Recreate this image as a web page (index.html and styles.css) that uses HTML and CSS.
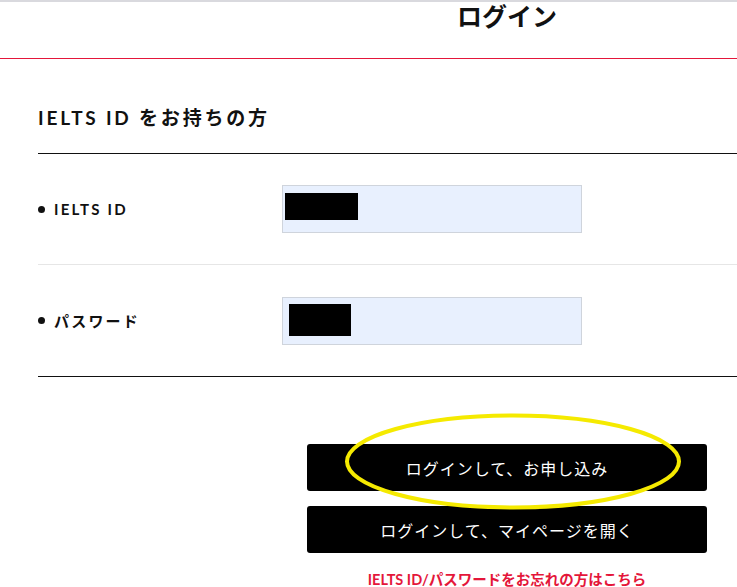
FILE: index.html
```html
<!DOCTYPE html>
<html lang="ja">

<head>
  <meta charset="UTF-8" />
  <title>ログイン</title>
  <meta name="viewport" content="width=device-width, initial-scale=1.0" />
  <link rel="stylesheet" href="styles.css">
</head>

<body>
  <div class="page">
    <header class="page-header">
      <h1>ログイン</h1>
    </header>

    <main class="content">
      <h2 class="section-title">IELTS ID をお持ちの方</h2>

      <form class="login-form">
        <div class="form-row">
          <label class="row-label">IELTS ID</label>
          <div class="field">
            <span class="mask mask-id"></span>
          </div>
        </div>
        <div class="form-row">
          <label class="row-label">パスワード</label>
          <div class="field">
            <span class="mask mask-pass"></span>
          </div>
        </div>
      </form>

      <div class="actions">
        <button type="button" class="btn">ログインして、お申し込み</button>
        <button type="button" class="btn">ログインして、マイページを開く</button>
        <a class="forgot" href="#">IELTS ID/パスワードをお忘れの方はこちら</a>

        <!-- highlight drawn over the first button -->
        <svg class="highlight" width="340" height="99" viewBox="0 0 340 99">
          <ellipse cx="170" cy="49.5" rx="166" ry="46" fill="none" stroke="#f5ea00" stroke-width="4" />
        </svg>
      </div>
    </main>
  </div>
</body>

</html>
```

FILE: styles.css
```css
* {
  box-sizing: border-box;
}

html,
body {
  margin: 0;
  padding: 0;
  overflow: hidden;
}

body {
  background-color: #fff;
  color: #111;
  font-family: "Lato", "Noto Sans CJK JP", sans-serif;
}

.page {
  width: 1014px;
  border-top: 2px solid #d9d9de;
}

.page-header {
  height: 57px;
  border-bottom: 1px solid #e4163a;
}

.page-header h1 {
  margin: 0;
  padding-top: 1px;
  text-align: center;
  font-family: "Liberation Sans", "Noto Sans CJK JP", sans-serif;
  font-size: 25px;
  font-weight: 700;
  line-height: 28px;
}

.content {
  padding: 0 38px;
}

.section-title {
  margin: 0;
  padding: 47px 0 23px;
  font-size: 19px;
  font-weight: 700;
  letter-spacing: 2.8px;
  line-height: 24px;
  border-bottom: 1px solid #111;
}

.login-form {
  border-bottom: 1px solid #111;
}

.form-row {
  display: flex;
  align-items: center;
  height: 110px;
}

.form-row + .form-row {
  height: 112px;
  border-top: 1px solid #e6e6e6;
}

.row-label {
  display: flex;
  align-items: center;
  width: 244px;
  font-size: 15px;
  font-weight: 700;
  letter-spacing: 2.2px;
}

.row-label::before {
  content: "";
  width: 7px;
  height: 7px;
  margin-right: 9px;
  border-radius: 50%;
  background-color: #111;
}

.field {
  display: flex;
  align-items: flex-start;
  width: 300px;
  height: 48px;
  background-color: #e8f0fe;
  border: 1px solid #cfd4dc;
}

.mask {
  display: block;
  background-color: #000;
}

.mask-id {
  width: 73px;
  height: 27px;
  margin: 7px 0 0 2px;
}

.mask-pass {
  width: 62px;
  height: 32px;
  margin: 6px 0 0 6px;
}

.actions {
  position: relative;
  display: flex;
  flex-direction: column;
  align-items: center;
  gap: 15px;
  padding-top: 67px;
}

.btn {
  width: 400px;
  height: 47px;
  border: none;
  border-radius: 3px;
  background-color: #000;
  color: #fff;
  font-family: "Noto Sans CJK JP", sans-serif;
  font-size: 16px;
  font-weight: 400;
  letter-spacing: 1px;
  cursor: pointer;
}

.forgot {
  color: #e4163a;
  font-family: "Lato", "Noto Sans CJK JP", sans-serif;
  font-size: 14.5px;
  font-weight: 700;
  text-decoration: none;
}

.highlight {
  position: absolute;
  top: 35px;
  left: 305px;
}
```
